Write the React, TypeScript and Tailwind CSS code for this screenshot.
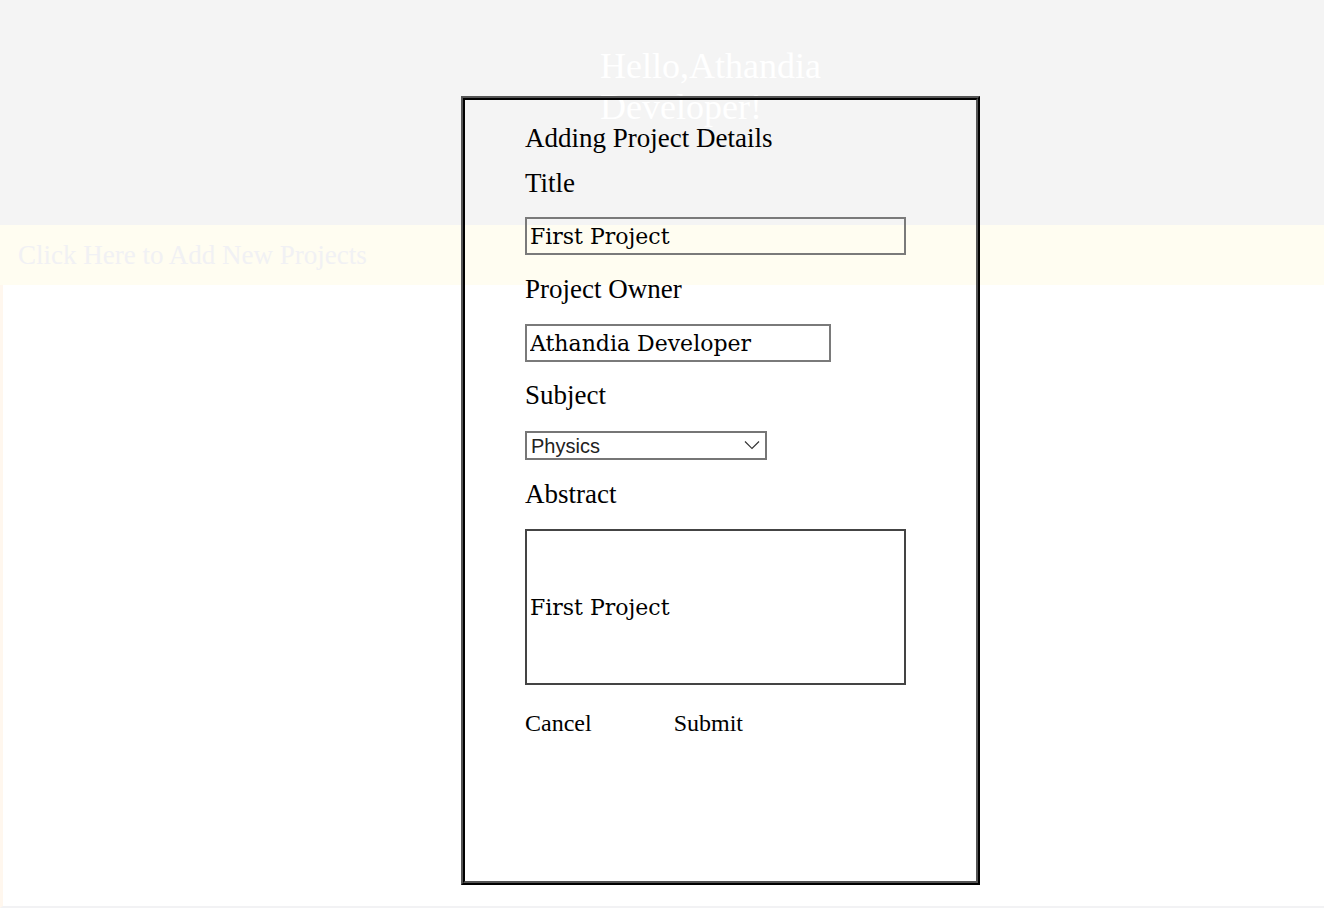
import { useState } from 'react';

const labelCls = "text-[27px] leading-[31px] text-black";
const fieldCls =
  "block border-2 border-[#7a7a7a] bg-transparent pl-[3px] text-[22px] text-black outline-none [font-family:'DejaVu_Serif',serif]";

export default function App() {
  const [title, setTitle] = useState('First Project');
  const [owner, setOwner] = useState('Athandia Developer');
  const [subject, setSubject] = useState('Physics');
  const [abstract, setAbstract] = useState('First Project');

  return (
    <div className="relative min-h-[908px] bg-white [font-family:'Liberation_Serif',serif]">
      <header className="h-[225px] bg-[#f4f4f4] pt-[46px]">
        <h1 className="ml-[600px] w-[240px] text-[36px] leading-[41px] text-white">
          Hello,Athandia Developer!
        </h1>
      </header>

      <div className="flex h-[60px] items-center bg-[#fffdf1] pl-[18px]">
        <button className="cursor-pointer text-[27px] leading-[31px] text-[#f1f1f4]">
          Click Here to Add New Projects
        </button>
      </div>

      <div className="h-[623px] border-b-2 border-l-[3px] border-b-[#f2f2f4] border-l-[#fff7ee]" />

      {/* modal */}
      <div className="absolute left-[461px] top-[96px] h-[789px] w-[519px] border-4 border-black [border-style:ridge] pl-[60px] pt-[23px]">
        <h2 className="text-[27px] leading-[31px] text-black">Adding Project Details</h2>

        <div className={`mt-[14px] ${labelCls}`}>Title</div>
        <input
          value={title}
          onChange={e => setTitle(e.target.value)}
          className={`mt-[18px] h-[38px] w-[381px] ${fieldCls}`}
        />

        <div className={`mt-[19px] ${labelCls}`}>Project Owner</div>
        <input
          value={owner}
          onChange={e => setOwner(e.target.value)}
          className={`mt-[19px] h-[38px] w-[306px] ${fieldCls}`}
        />

        <div className={`mt-[18px] ${labelCls}`}>Subject</div>
        <div className="relative mt-[20px] w-[242px]">
          <select
            value={subject}
            onChange={e => setSubject(e.target.value)}
            className="block h-[29px] w-[242px] appearance-none border-2 border-[#767676] bg-white pl-[4px] text-[20px] leading-[24px] text-[#222] outline-none [font-family:'Liberation_Sans',sans-serif]"
          >
            <option>Physics</option>
            <option>Chemistry</option>
            <option>Biology</option>
            <option>Mathematics</option>
          </select>
          <svg
            className="pointer-events-none absolute right-[7px] top-[9px] h-[10px] w-[16px]"
            viewBox="0 0 16 10"
            fill="none"
            stroke="#333"
            strokeWidth="1.2"
          >
            <path d="M1 1.5 L8 8.5 L15 1.5" />
          </svg>
        </div>

        <div className={`mt-[19px] ${labelCls}`}>Abstract</div>
        <input
          value={abstract}
          onChange={e => setAbstract(e.target.value)}
          className={`mt-[19px] h-[156px] w-[381px] border-[#444] ${fieldCls}`}
        />

        <div className="mt-[24px] flex gap-[82px] text-[24px] leading-[28px] text-black">
          <button className="cursor-pointer">Cancel</button>
          <button className="cursor-pointer">Submit</button>
        </div>
      </div>
    </div>
  );
}
